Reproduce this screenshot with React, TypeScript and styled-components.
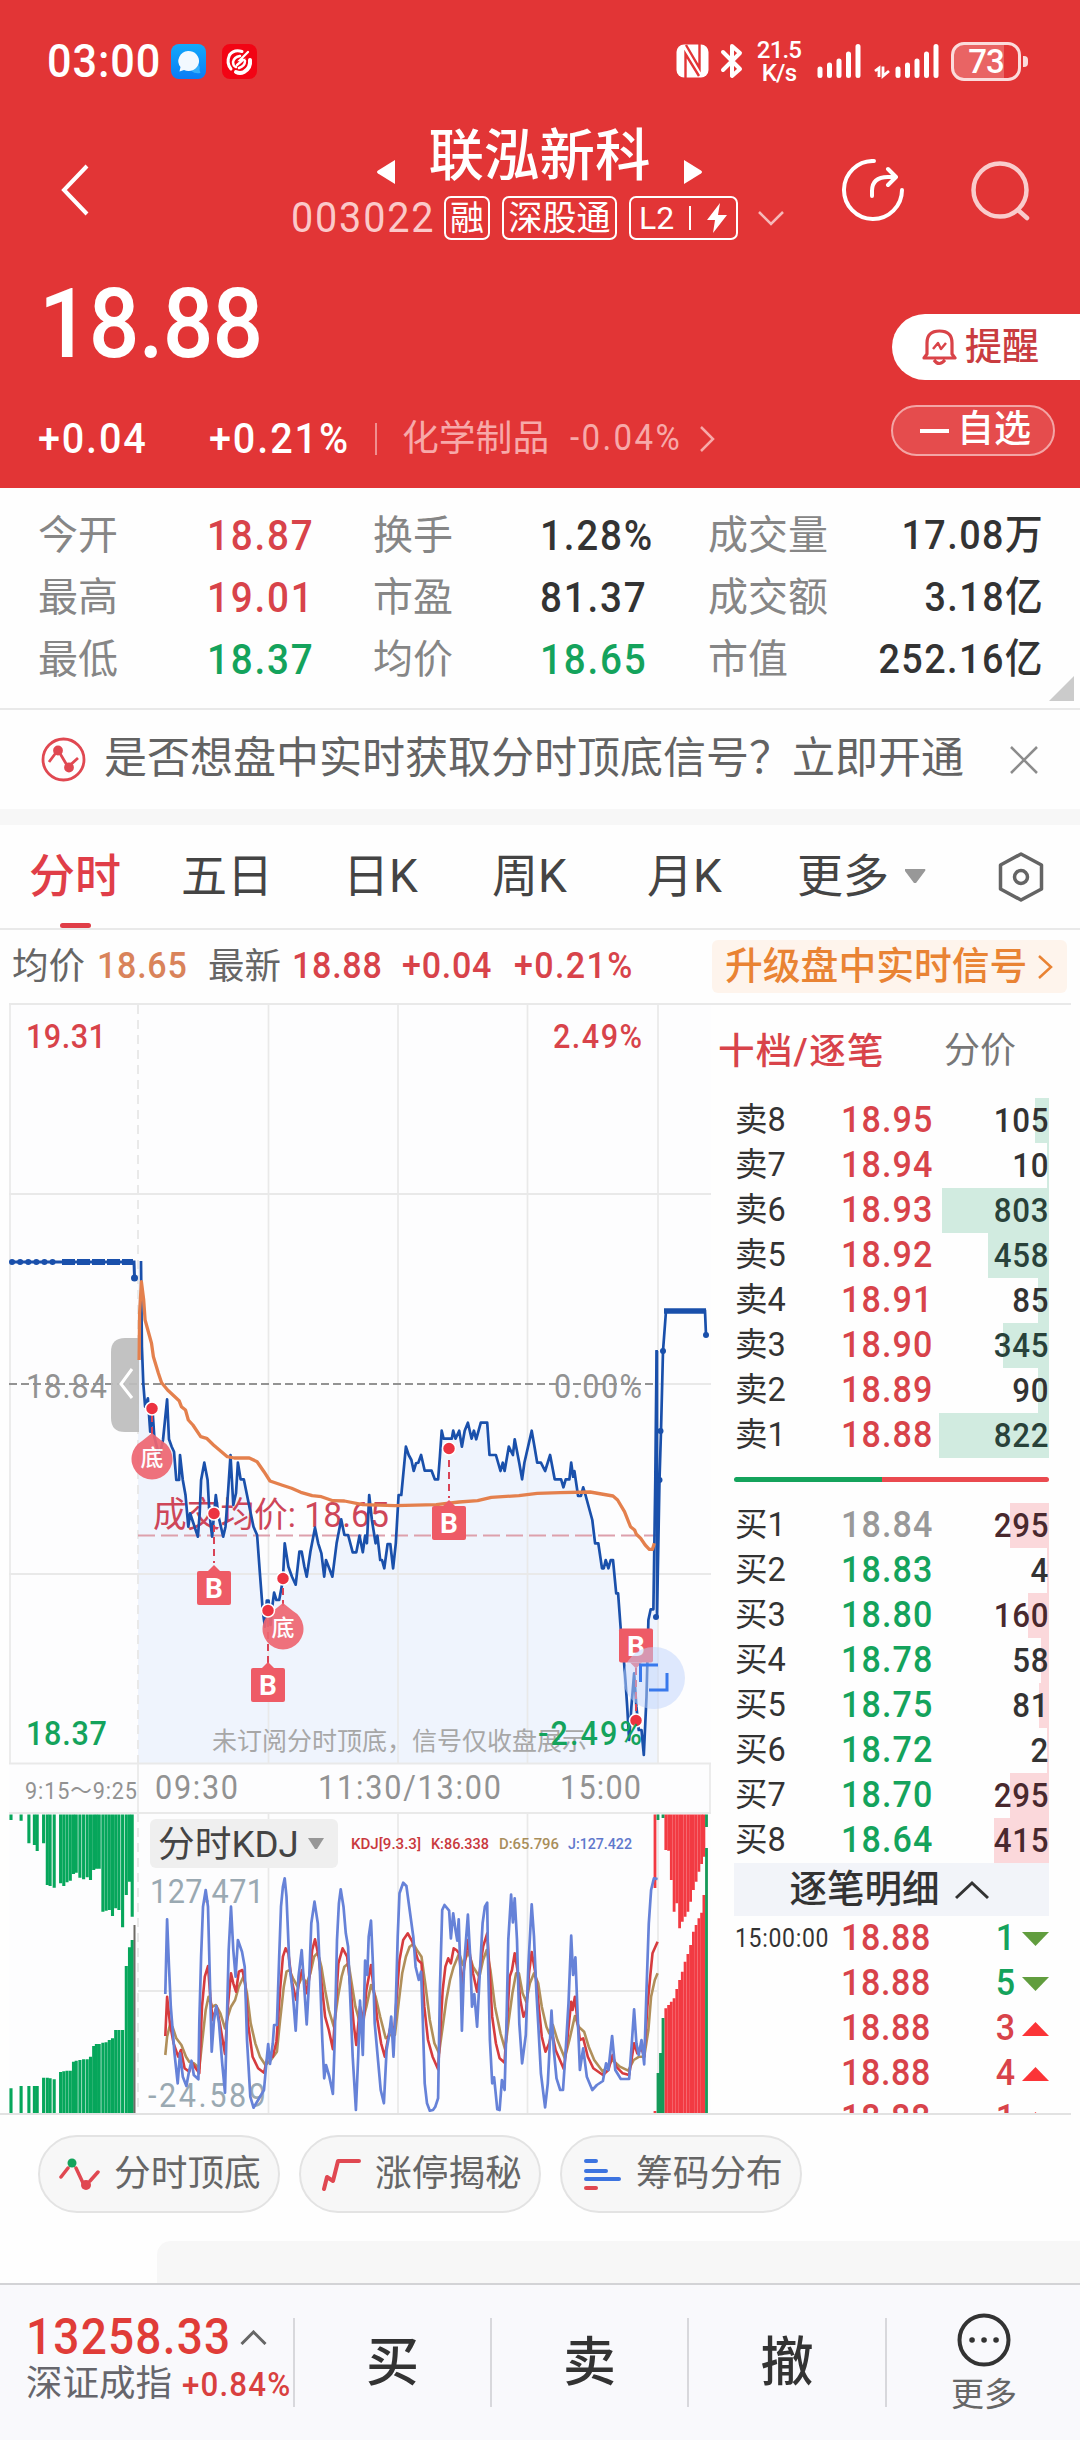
import React from "react";
import styled, { createGlobalStyle, css } from "styled-components";

const RED = "#e23536";
const UP = "#d8434a";
const DOWN = "#14a35c";
const LINE = "#e9e9e9";
const BLUE = "#1a50ab";

const Global = createGlobalStyle`
  * { box-sizing: border-box; }
  body { margin: 0; background: #fefefe; }
  body, svg text { font-family: Roboto, "Noto Sans CJK SC", sans-serif; }
  svg { display: block; flex: none; }
`;

const Page = styled.div`
  width: 1080px;
  height: 2440px;
  overflow: hidden;
  display: flex;
  flex-direction: column;
  background: #fefefe;
`;

const Txt = styled.span<{ $s: number; $c?: string; $ls?: number; $w?: number; $b?: number; $up?: number; $down?: number }>`
  display: block;
  flex: none;
  white-space: nowrap;
  line-height: 1.2;
  font-size: ${(p) => p.$s}px;
  color: ${(p) => p.$c || "inherit"};
  letter-spacing: ${(p) => p.$ls || 0}px;
  font-weight: ${(p) => p.$b || 400};
  width: ${(p) => (p.$w ? p.$w + "px" : "auto")};
  padding-bottom: ${(p) => p.$up || 0}px;
  padding-top: ${(p) => p.$down || 0}px;
`;

/* Figures are set slightly condensed with open tracking */
const Num = styled(Txt)<{ $right?: boolean }>`
  letter-spacing: calc(0.046em + ${(p) => p.$ls || 0}px);
  transform: scaleX(0.92);
  transform-origin: ${(p) => (p.$right ? "right" : "left")} center;
  ${(p) => p.$right && css`margin-right: -0.046em;`}
`;

/* ---------- header ---------- */
const Header = styled.header`
  height: 488px;
  flex: none;
  background: ${RED};
  color: #fff;
`;
const StatusBar = styled.div`
  height: 122px;
  padding: 0 52px 0 47px;
  display: flex;
  align-items: center;
`;
const AppIcon = styled.span<{ $bg: string }>`
  width: 35px;
  height: 35px;
  margin-right: 16px;
  border-radius: 8px;
  background: ${(p) => p.$bg};
`;
const StatusRight = styled.div`
  margin-left: auto;
  display: flex;
  align-items: center;
`;
const Speed = styled.div`
  width: 50px;
  margin: 2px 12px 0 0;
  font-size: 24px;
  font-weight: 500;
  line-height: 23.5px;
  letter-spacing: -0.8px;
  text-align: center;
  white-space: nowrap;
`;
const Battery = styled.div`
  width: 70px;
  height: 39px;
  margin-left: 11px;
  border: 3px solid #fbdcdc;
  border-radius: 13px;
  background: linear-gradient(90deg, #e96464 78%, ${RED} 78%);
  text-align: center;
  font-size: 33px;
  font-weight: 500;
  line-height: 34px;
  letter-spacing: -1px;
`;
const BatteryTip = styled.div`
  width: 5px;
  height: 11px;
  margin: 0 0 0 2px;
  border-radius: 0 4px 4px 0;
  background: #fbdcdc;
`;
const Nav = styled.div`
  height: 136px;
  padding-left: 61px;
  display: grid;
  grid-template-columns: 230px 551px 129px 60px;
  align-items: center;
`;
const TitleBlock = styled.div`
  width: 494px;
  align-self: start;
  display: flex;
  flex-direction: column;
`;
const TitleRow = styled.div`
  height: 68px;
  padding: 0 83px 0 86px;
  display: flex;
  justify-content: space-between;
  align-items: center;
`;
const TitleArrow = styled.svg`
  margin-top: 31px;
`;
const CodeRow = styled.div`
  height: 56px;
  display: flex;
  align-items: center;
`;
const Tag = styled.span<{ $w: number; $m: number }>`
  width: ${(p) => p.$w}px;
  height: 44px;
  margin-right: ${(p) => p.$m}px;
  border: 2px solid #fff;
  border-radius: 7px;
  display: flex;
  align-items: center;
  justify-content: center;
  gap: 15px;
  font-size: 34px;
  line-height: 38px;
  white-space: nowrap;
`;
const TagBar = styled.i`
  width: 2px;
  height: 24px;
  background: #fff;
`;
const Quote = styled.div`
  height: 230px;
  display: grid;
  grid-template-columns: 891px 189px;
`;
const PriceRow = styled.div`
  height: 132px;
  padding-left: 39px;
  display: flex;
  align-items: center;
`;
const ChangeRow = styled.div`
  height: 98px;
  padding-left: 38px;
  padding-bottom: 0;
  display: flex;
  align-items: center;
`;
const VBar = styled.i<{ $h: number; $c: string; $m?: string }>`
  width: 2px;
  height: ${(p) => p.$h}px;
  margin: ${(p) => p.$m || 0};
  background: ${(p) => p.$c};
`;
const Actions = styled.div`
  padding-top: 56px;
  display: flex;
  flex-direction: column;
  gap: 25px;
`;
const RemindButton = styled.button`
  height: 66px;
  margin: 0 0 0 1px;
  padding: 0 0 0 30px;
  border: 0;
  border-radius: 33px 0 0 33px;
  background: #fff;
  color: #c93c40;
  display: flex;
  align-items: center;
  gap: 8px;
  font-family: inherit;
`;
const WatchButton = styled.button`
  width: 164px;
  height: 51px;
  padding: 0 0 0 27px;
  border: 2px solid #f3a5a5;
  border-radius: 26px;
  background: #e54c4d;
  color: #fff;
  display: flex;
  align-items: center;
  gap: 8px;
  font-family: inherit;
`;
const Dash = styled.i`
  width: 29px;
  height: 4px;
  background: #fff;
`;

/* ---------- stats ---------- */
const Stats = styled.section`
  position: relative;
  height: 222px;
  flex: none;
  padding: 16px 38px 0;
  border-bottom: 2px solid ${LINE};
  display: grid;
  grid-template-columns: 169px 166px 167px 168px 130px 204px;
  grid-auto-rows: 62px;
  align-items: center;
  & > :nth-child(6n) { justify-self: end; }
`;
const Corner = styled.i`
  position: absolute;
  right: 6px;
  bottom: 7px;
  border-left: 25px solid transparent;
  border-bottom: 25px solid #cbcbcb;
`;
const Alert = styled.section`
  height: 99px;
  flex: none;
  padding: 0 42px 0 41px;
  display: flex;
  align-items: center;
  gap: 18px;
  & > svg:last-child { margin-left: auto; }
`;
const Band = styled.div`
  height: 16px;
  flex: none;
  background: #f7f7f7;
`;

/* ---------- tabs ---------- */
const Tabs = styled.nav`
  height: 105px;
  flex: none;
  padding-left: 29px;
  border-bottom: 2px solid ${LINE};
  display: grid;
  grid-template-columns: 152px 162px 149px 155px 150px 107px 94px 46px;
  align-items: center;
`;
const Tab = styled.div<{ $on?: boolean }>`
  position: relative;
  height: 103px;
  line-height: 103px;
  font-size: 46px;
  font-weight: ${(p) => (p.$on ? 500 : 400)};
  color: ${(p) => (p.$on ? "#e03e48" : "#444")};
  white-space: nowrap;
  &::after {
    content: "";
    display: ${(p) => (p.$on ? "block" : "none")};
    position: absolute;
    left: 31px;
    bottom: 0;
    width: 31px;
    height: 5px;
    border-radius: 3px;
    background: #e03e48;
  }
`;
const InfoRow = styled.div`
  height: 73px;
  flex: none;
  padding-left: 12px;
  display: flex;
  align-items: center;
`;
const Upgrade = styled.div`
  width: 355px;
  height: 53px;
  padding: 0 14px 0 13px;
  border-radius: 6px;
  background: #fef4ec;
  display: flex;
  align-items: center;
  justify-content: space-between;
`;

/* ---------- chart and order book ---------- */
const Main = styled.section`
  height: 1112px;
  flex: none;
  margin: 0 9px 0 0;
  display: flex;
  border-bottom: 2px solid #e2e2e2;
  overflow: hidden;
`;
const ChartBox = styled.div`
  position: relative;
  width: 711px;
  flex: none;
`;
const IndicatorSelect = styled.div`
  position: absolute;
  left: 150px;
  top: 816px;
  width: 188px;
  height: 49px;
  padding: 0 14px 0 8px;
  border-radius: 6px;
  background: #efefef;
  display: flex;
  align-items: center;
  justify-content: space-between;
`;
const Book = styled.div`
  flex: 1;
  padding-left: 23px;
  padding-right: 22px;
  border-top: 2px solid ${LINE};
`;
const BookTabs = styled.div`
  height: 93px;
  margin-left: -16px;
  display: flex;
  align-items: center;
`;
const Row = styled.div<{ $tint: string; $bar: number }>`
  height: 45px;
  padding-left: 1px;
  display: grid;
  grid-template-columns: 106px 100px 107px;
  align-items: center;
  background: linear-gradient(${(p) => p.$tint}, ${(p) => p.$tint}) right / ${(p) => p.$bar}px 100% no-repeat;
  & > :last-child { justify-self: end; }
`;
const Ratio = styled.div`
  height: 5px;
  margin: 19px 0 21px;
  border-radius: 3px;
  background: linear-gradient(90deg, #14a35c 47%, #ea4a4f 47%);
`;
const DetailHead = styled.div`
  height: 53px;
  padding-right: 5px;
  background: #f2f4f9;
  display: flex;
  align-items: center;
  justify-content: center;
  gap: 15px;
`;
const TickRow = styled.div`
  height: 45px;
  padding-left: 1px;
  display: grid;
  grid-template-columns: 106px 100px 1fr 34px;
  align-items: center;
  & > :nth-child(3) { justify-self: end; }
  & > :last-child { justify-self: end; }
`;

/* ---------- bottom ---------- */
const Pills = styled.div`
  height: 126px;
  flex: none;
  padding: 20px 38px 0;
  display: flex;
  gap: 19px;
`;
const Pill = styled.div`
  width: 242px;
  height: 78px;
  padding-left: 19px;
  border: 2px solid #e3e3e3;
  border-radius: 39px;
  background: #f7f7f7;
  display: flex;
  align-items: center;
  gap: 14px;
`;
const Sheet = styled.div`
  height: 42px;
  flex: none;
  margin-left: 157px;
  border-top-left-radius: 14px;
  background: #f7f7f7;
`;
const Footer = styled.footer`
  height: 157px;
  flex: none;
  border-top: 2px solid #d3d3d6;
  background: #f9f9fc;
  display: grid;
  grid-template-columns: 293px 197px 197px 198px 1fr;
`;
const IndexCell = styled.div`
  padding: 24px 0 0 26px;
  display: flex;
  flex-direction: column;
`;
const Inline = styled.div<{ $h: number }>`
  height: ${(p) => p.$h}px;
  display: flex;
  align-items: center;
`;
const TradeCell = styled.div`
  height: 89px;
  margin-top: 33px;
  padding-bottom: 9px;
  border-left: 2px solid #d8d8dc;
  display: flex;
  flex-direction: column;
  align-items: center;
  justify-content: center;
  font-size: 53px;
  font-weight: 500;
  color: #333;
`;
const MoreCell = styled(TradeCell)`
  padding: 3px 0 0 1px;
  gap: 8px;
`;

/* ---------- data ---------- */
const stats: [string, string, string][][] = [
  [["今开", "18.87", UP], ["换手", "1.28%", "#333"], ["成交量", "17.08万", "#333"]],
  [["最高", "19.01", UP], ["市盈", "81.37", "#333"], ["成交额", "3.18亿", "#333"]],
  [["最低", "18.37", DOWN], ["均价", "18.65", DOWN], ["市值", "252.16亿", "#333"]],
];
const sells: [string, string, string, number][] = [
  ["卖8", "18.95", "105", 14], ["卖7", "18.94", "10", 2], ["卖6", "18.93", "803", 107], ["卖5", "18.92", "458", 61],
  ["卖4", "18.91", "85", 11], ["卖3", "18.90", "345", 46], ["卖2", "18.89", "90", 11], ["卖1", "18.88", "822", 110],
];
const buys: [string, string, string, number][] = [
  ["买1", "18.84", "295", 39], ["买2", "18.83", "4", 2], ["买3", "18.80", "160", 21], ["买4", "18.78", "58", 8],
  ["买5", "18.75", "81", 10], ["买6", "18.72", "2", 2], ["买7", "18.70", "295", 39], ["买8", "18.64", "415", 55],
];
const ticks: [string, string, boolean][] = [
  ["15:00:00", "1", false], ["", "5", false], ["", "3", true], ["", "4", true], ["", "1", true],
];

const priceData = "307,-357 309,-100 312,10 316,80 322,55 327,155 332,85 336,170 347,230 355,180 364,58 368,178 374,200 379,215 384,300 390,300 392,225 398,300 404,345 410,440 414,400 420,425 431,470 435,400 438,300 445,248 452,300 456,400 462,470 470,345 476,410 486,470 491,440 497,330 502,225 508,375 514,340 518,248 524,298 531,298 538,345 546,400 552,440 560,465 566,580 572,690 577,740 581,662 585,662 589,735 592,690 597,638 602,660 608,660 616,600 620,490 628,560 636,590 644,614 652,515 657,515 663,560 668,590 676,515 686,443 693,490 700,520 706,590 710,540 717,565 724,590 733,490 743,418 750,465 758,465 768,517 776,517 783,467 790,517 795,467 799,490 804,345 810,420 818,490 822,467 828,540 832,540 837,565 844,492 850,492 856,565 862,490 868,345 874,345 884,200 890,225 896,240 901,273 906,250 911,248 917,225 925,272 940,272 947,298 954,298 958,230 962,152 966,176 984,176 987,152 992,176 1000,152 1006,200 1012,152 1019,128 1027,176 1032,152 1037,178 1047,128 1061,128 1066,225 1080,225 1090,273 1095,248 1099,273 1108,200 1117,225 1121,178 1131,250 1137,298 1142,248 1158,152 1164,200 1170,248 1178,248 1187,273 1198,225 1208,298 1222,298 1227,322 1232,298 1240,298 1244,248 1248,290 1251,273 1259,348 1265,348 1270,322 1275,345 1290,420 1296,490 1303,490 1311,565 1315,565 1319,540 1325,565 1330,540 1335,540 1342,640 1346,640 1352,750 1358,830 1362,900 1366,980 1370,1080 1375,980 1381,880 1386,980 1391,1050 1397,1050 1402,1125 1408,950 1412,720 1417,688 1423,688 1427,300 1430,-90";
const averageData = "303,-60 304,-200 308,-295 313,-240 316,-180 330,-110 334,-70 345,-20 352,8 365,30 390,62 395,80 404,90 410,120 420,135 437,170 450,175 465,195 495,230 510,234 543,234 560,245 575,275 588,303 615,316 635,325 655,337 680,347 700,350 725,362 750,363 790,374 860,377 950,374 1000,366 1040,362 1070,352 1130,347 1170,340 1220,338 1285,336 1310,342 1335,348 1345,360 1360,395 1373,440 1382,450 1386,463 1395,475 1405,495 1414,508 1421,508 1425,490";
const jData = "360,612 364,388 368,530 372,650 380,790 387,880 392,790 398,860 406,888 411,850 417,812 422,855 432,868 434,700 438,500 442,350 448,300 453,350 457,560 461,785 466,690 471,648 477,700 484,820 490,908 494,700 498,480 503,350 508,480 513,560 518,450 527,485 533,530 538,750 545,920 552,953 560,935 575,900 580,820 584,762 588,822 594,760 597,705 603,705 608,500 612,350 616,290 620,265 624,320 630,520 637,600 644,722 650,560 657,480 663,600 668,703 673,580 678,400 685,335 692,400 697,560 702,750 706,865 710,825 717,858 725,912 729,750 734,450 738,340 742,298 748,350 753,430 758,470 762,600 768,800 775,960 780,800 784,632 790,795 795,512 800,555 803,440 808,392 812,520 816,700 822,790 829,900 836,940 842,780 847,740 852,680 857,800 862,640 866,440 870,310 878,278 885,288 893,370 900,440 905,530 912,570 917,545 921,700 925,880 930,940 936,962 943,960 948,950 954,925 958,600 963,360 968,345 978,362 982,445 987,370 992,420 996,452 999,388 1003,560 1006,722 1011,520 1019,374 1024,500 1028,650 1033,612 1039,710 1045,550 1051,400 1056,350 1061,338 1063,520 1067,750 1072,880 1076,862 1083,958 1088,960 1093,870 1099,900 1103,700 1107,450 1113,314 1117,397 1121,325 1126,450 1131,700 1137,820 1145,735 1151,520 1158,343 1163,440 1168,600 1172,700 1178,850 1187,952 1193,880 1201,662 1206,780 1212,865 1220,900 1226,900 1232,780 1238,640 1244,437 1248,555 1253,502 1258,680 1263,840 1270,775 1278,860 1290,900 1300,885 1313,873 1320,820 1325,840 1333,738 1340,840 1352,867 1370,867 1376,760 1381,658 1386,760 1391,795 1397,750 1403,823 1408,600 1413,400 1418,300 1424,265 1432,267";
const kData = "360,738 364,620 370,700 378,760 388,800 394,780 402,835 412,845 418,818 434,850 440,650 446,560 453,528 458,620 463,690 472,650 480,710 490,792 496,650 503,550 508,580 514,605 520,545 528,540 534,580 540,700 550,800 562,835 575,848 585,790 594,800 602,755 610,600 616,500 622,475 628,490 635,570 645,630 652,570 658,540 668,610 674,560 680,480 686,448 694,500 702,600 708,680 716,720 725,778 731,650 737,520 746,475 756,500 764,600 770,700 776,765 784,650 792,690 798,600 808,525 815,610 822,690 830,760 838,800 845,745 852,700 858,735 864,620 870,510 878,450 888,430 898,455 910,510 918,520 924,650 932,750 942,800 954,838 960,700 964,600 970,530 976,505 982,520 988,475 994,480 1000,490 1006,585 1012,520 1019,450 1024,500 1030,550 1039,605 1046,530 1052,470 1061,430 1066,540 1072,680 1080,760 1088,805 1099,818 1104,700 1110,560 1115,540 1121,490 1127,540 1133,630 1140,680 1146,660 1152,550 1158,486 1166,550 1174,660 1180,740 1188,785 1196,760 1202,725 1210,780 1228,838 1236,740 1244,635 1247,660 1252,620 1258,700 1263,750 1270,745 1280,800 1292,835 1313,855 1325,840 1334,795 1342,830 1356,850 1370,855 1381,760 1388,790 1397,775 1403,800 1410,650 1416,560 1421,490 1432,455";
const dData = "360,795 364,740 370,705 376,712 384,745 395,765 405,800 412,815 422,820 434,835 440,760 448,660 454,620 462,650 470,645 480,670 490,715 496,680 503,650 512,630 520,590 530,560 538,610 546,700 556,760 566,800 578,825 590,810 603,785 610,690 618,590 624,545 630,540 638,565 648,590 658,560 668,580 676,550 684,500 692,488 700,530 708,600 716,660 727,710 736,620 744,560 750,530 759,520 766,580 774,650 782,690 790,690 798,650 808,585 818,620 828,680 840,745 850,735 860,735 868,640 876,550 884,500 892,470 900,462 908,480 918,500 926,580 936,690 946,760 956,790 964,710 972,630 980,570 988,530 1000,490 1008,525 1020,485 1030,530 1044,560 1052,510 1060,480 1068,540 1078,650 1090,730 1100,778 1108,690 1116,610 1124,550 1130,550 1138,610 1146,635 1154,580 1163,550 1172,580 1180,650 1190,710 1196,730 1204,705 1214,750 1230,805 1240,750 1252,678 1260,710 1272,725 1282,770 1294,810 1313,845 1334,810 1350,830 1368,842 1380,810 1392,800 1403,800 1412,720 1418,620 1426,570 1432,550";

/* Auction bars: x, end of the hanging bar, start of the standing bar */
const openBars: [number, number, number][] = [
  [24, 90, 895], [46, 92, 888], [63, 160, 888], [75, 165, 888], [81, 183, 888], [95, 160, 863], [103, 285, 863], [109, 288, 865],
  [118, 293, 868], [132, 280, 846], [139, 288, 844], [146, 277, 842], [153, 272, 842], [160, 252, 815], [166, 248, 812],
  [174, 263, 810], [182, 268, 808], [190, 262, 808], [197, 270, 800], [204, 240, 768], [210, 236, 762], [216, 236, 762],
  [224, 365, 758], [231, 362, 757], [238, 360, 750], [245, 378, 745], [252, 355, 720], [259, 360, 720], [267, 412, 720],
  [275, 315, 528], [282, 275, 472], [288, 380, 450],
];
const closeBars: [number, number, number][] = [
  [1450, 180, 655], [1456, 182, 645], [1462, 270, 635], [1468, 365, 625], [1474, 340, 597], [1480, 415, 570], [1486, 395, 545],
  [1492, 380, 515], [1498, 365, 492], [1504, 335, 465], [1510, 300, 425], [1516, 275, 405], [1522, 245, 385], [1528, 222, 368], [1533, 200, 315],
];

const SX = 720 / 1568;
const px = (x: number) => +(x * SX).toFixed(1);
const py = (y: number, top: number) => +(top + y / 3).toFixed(1);
const pts = (s: string, top: number) =>
  s.split(" ").map((p) => { const [x, y] = p.split(",").map(Number); return `${px(x)},${py(y, top)}`; }).join(" ");
const P = 1380;
const K = 1790;

const Label = ({ x, y, s, w, c, children, b = 400 }: { x: number; y: number; s: number; w: number; c: string; b?: number; children: string }) => (
  <text x={x} y={y} fontSize={s} fill={c} fontWeight={b} textLength={w} lengthAdjust="spacingAndGlyphs">{children}</text>
);
const Figure = ({ x, y, s, w, c, children, b = 400 }: { x: number; y: number; s: number; w: number; c: string; b?: number; children: string }) => (
  <text transform={`translate(${x} ${y}) scale(0.9 1)`} fontSize={s} fill={c} fontWeight={b} textLength={w / 0.9} lengthAdjust="spacing">{children}</text>
);

const BuyMark = ({ x, y, down }: { x: number; y: number; down?: boolean }) => (
  <g>
    <path d={down ? `M${x - 6} ${y + 17}h12l-6 6z` : `M${x - 6} ${y - 17}h12l-6 -6z`} fill="#ee5b66" />
    <rect x={x - 17} y={y - 17} width={34} height={34} rx={2} fill="#ee5b66" />
    <text x={x} y={y + 10} fontSize={28} fontWeight={700} fill="#fff" textAnchor="middle">B</text>
  </g>
);
const BottomMark = ({ x, y }: { x: number; y: number }) => (
  <g opacity={0.92}>
    <path d={`M${x} ${y - 25}l10 8a20.500 20.500 0 1 1 -20 0z`} fill="#ee6672" />
    <text x={x} y={y + 8} fontSize={23} fill="#fff" fontWeight={500} textAnchor="middle">底</text>
  </g>
);

const Chart = () => {
  const area = `138,1763 138,1270 ${pts(priceData, P)} 658,1763`;
  return (
    <svg width="711" height="1112" viewBox="0 1003 711 1112" fill="none">
      <rect x="9" y="1003" width="702" height="1112" fill="#fdfdfe" />
      <polygon points={area} fill="#eff4fd" />
      <g stroke={LINE} strokeWidth="2">
        <path d="M10 1003V1763M268.500 1003V1763M398 1003V1763M527.500 1003V1763M658 1003V1763M268.500 1813V2113M398 1813V2113M527.500 1813V2113M658 1813V2113M710 1763V1813M138 1763V1813" strokeWidth="1.700" />
        <path d="M9 1004H711M9 1194H711M658 1384H711M9 1574H711M9 1763.500H711M9 1813H711M138 1991H658" />
        <path d="M138 1005V1763M138 1813V2113" strokeDasharray="9 6" />
      </g>
      <path d="M9 1384H656" stroke="#939393" strokeWidth="2" strokeDasharray="8 4" />
      <Label x={212} y={1750} s={25} w={375} c="#a7a7a7">未订阅分时顶底，信号仅收盘展示</Label>
      <Label x={153} y={1527} s={35} w={236} c="#ce4659">成交均价: 18.65</Label>
      <path d="M138 1535.500H656" stroke="#dda0ac" strokeWidth="2" strokeDasharray="17 6" />
      <path d="M10 1262H134L134.500 1277" stroke={BLUE} strokeWidth="3" />
      <path d="M12 1262H60" stroke={BLUE} strokeWidth="6" strokeLinecap="round" strokeDasharray="0.1 8" />
      <path d="M62 1262H133" stroke={BLUE} strokeWidth="6" strokeDasharray="13 2" />
      <circle cx="134.500" cy="1278" r="3.500" fill={BLUE} />
      <path d="M111 1352q0 -14 14 -14H139V1432H125q-14 0 -14 -14z" fill="#bdbdbd" fillOpacity="0.920" />
      <path d="M132 1369L121 1384L132 1398" stroke="#fff" strokeWidth="3" />
      <polyline points={pts(priceData, P)} stroke={BLUE} strokeWidth="2.700" strokeLinejoin="round" />
      <path d="M657 1351V1617L659.500 1480L661 1431L663 1351L666 1311H705L706 1335" stroke={BLUE} strokeWidth="2.700" />
      <path d="M664 1311H706" stroke={BLUE} strokeWidth="5.500" />
      {[[659.5, 1480], [660.5, 1431], [663, 1351], [706, 1335], [656, 1617]].map(([x, y]) => <circle key={y} cx={x} cy={y} r="3" fill={BLUE} />)}
      <polyline points={pts(averageData, P)} stroke="#e4804d" strokeWidth="3.300" strokeLinejoin="round" />

      <Figure x={26} y={1048} s={34} w={80} c={UP} b={500}>19.31</Figure>
      <Figure x={553} y={1048} s={34} w={89} c={UP} b={500}>2.49%</Figure>
      <Figure x={26} y={1398} s={34} w={81} c="#929292">18.84</Figure>
      <Figure x={554} y={1398} s={34} w={88} c="#929292">0.00%</Figure>
      <Figure x={26} y={1745} s={34} w={81} c={DOWN} b={500}>18.37</Figure>

      <g stroke="#d94356" strokeWidth="2" strokeDasharray="7 5">
        <path d="M152 1415V1436M214 1525V1563M268 1620V1664M283 1588V1606M449 1460V1498M636 1668V1712" />
      </g>
      <BottomMark x={152} y={1458} />
      <BottomMark x={283} y={1628} />
      <BuyMark x={214} y={1588} />
      <BuyMark x={268} y={1685} />
      <BuyMark x={449} y={1523} />
      <BuyMark x={636} y={1645.5} down />
      <circle cx="654" cy="1678" r="31" fill="#bfd4fb" fillOpacity="0.500" />
      {[[152, 1408.5], [214, 1513.5], [268, 1610.5], [283, 1578.5], [449, 1448.5], [636, 1720.5]].map(([x, y]) => (
        <circle key={y} cx={x} cy={y} r="6.500" fill="#ec3341" stroke="#fff" strokeWidth="1.500" />
      ))}
      <path d="M640.500 1682V1665H658M667 1673V1690H649" stroke="#3979ec" strokeWidth="3" />
      <Figure x={538} y={1745} s={34} w={104} c={DOWN} b={500}>-2.49%</Figure>

      <Figure x={25} y={1799} s={24} w={112} c="#929292">9:15～9:25</Figure>
      <Figure x={155} y={1799} s={34} w={83} c="#929292">09:30</Figure>
      <Figure x={318} y={1799} s={34} w={183} c="#929292">11:30/13:00</Figure>
      <Figure x={560} y={1799} s={34} w={81} c="#929292">15:00</Figure>

      {openBars.map(([x, a, b]) => (
        <path key={x} d={`M${px(x)} 1814.500V${py(a, K)}M${px(x)} ${py(b, K)}V2113`} stroke="#06a65b" strokeWidth="3.100" />
      ))}
      <path d="M134.500 1925V2113" stroke="#6d6a66" strokeWidth="2" />
      {closeBars.map(([x, a, b]) => (
        <path key={x} d={`M${px(x)} 1814.500V${py(a, K)}M${px(x)} ${py(b, K)}V2113`} stroke="#f23a42" strokeWidth="2.800" />
      ))}
      <path d="M655 1814.500V1888M655 2111V2113" stroke="#f23a42" strokeWidth="2.800" />
      <path d="M658 1814.500V1820M663 1814.500V1818M706.500 1814.500V1827M706.500 1848V2113M658 2073V2113M660.500 2053V2113M663 2018V2113" stroke="#159a59" strokeWidth="2.800" />

      <Figure x={150} y={1903} s={34} w={114} c="#9aa9b2">127.471</Figure>
      <Figure x={148} y={2107} s={34} w={118} c="#9aa9b2">-24.589</Figure>
      <polyline points={pts(dData, K)} stroke="#b08f5a" strokeWidth="2.600" strokeLinejoin="round" />
      <polyline points={pts(kData, K)} stroke="#d63b3e" strokeWidth="2.600" strokeLinejoin="round" />
      <polyline points={pts(jData, K)} stroke="#6682d8" strokeWidth="2.700" strokeLinejoin="round" />
      <Label x={351} y={1849} s={15.5} w={70} c="#c9383d" b={500}>KDJ[9.3.3]</Label>
      <Label x={431} y={1849} s={15.5} w={58} c="#c9383d" b={500}>K:86.338</Label>
      <Label x={499} y={1849} s={15.5} w={60} c="#a98e5b" b={500}>D:65.796</Label>
      <Label x={568} y={1849} s={15.5} w={64} c="#5f78cc" b={500}>J:127.422</Label>
    </svg>
  );
};

const Bars = () => (
  <svg width="46" height="36" viewBox="0 0 46 36" stroke="#fff" strokeWidth="5" strokeLinecap="round">
    <path d="M4 26V32.500M13.500 22V32.500M23 18V32.500M32.500 11V32.500M42 3.500V32.500" />
  </svg>
);

export default function App() {
  return (
    <Page>
      <Global />
      <Header>
        <StatusBar>
          <Num $s={47} $w={124} $b={500} $ls={-1.2}>03:00</Num>
          <AppIcon $bg="linear-gradient(#12a9fb,#0a7cf5)">
            <svg width="35" height="35" viewBox="0 0 35 35">
              <path d="M25 19a6 6 0 0 1 3.500 7l1 3q-6 1-9-2z" fill="#35aefa" />
              <path d="M17 7a10.500 10 0 1 1 -4 19l-4.500 1.500 1-4.500A10.500 10 0 0 1 17 7z" fill="#f2f9ff" />
            </svg>
          </AppIcon>
          <AppIcon $bg="#f20414">
            <svg width="35" height="35" viewBox="0 0 35 35" fill="none" stroke="#fff" strokeLinecap="round">
              <path d="M20 7.500Q12 5 7.500 11Q4 19 9 25" strokeWidth="3" />
              <path d="M28 16Q29 24 22 28Q18 30 14 28" strokeWidth="4" />
              <path d="M18 12Q12 13 11 18Q11 22 14 23M23 17Q23 22 17 24" strokeWidth="2.500" />
              <path d="M26 8L18 16H21L15 21" strokeWidth="2.300" />
            </svg>
          </AppIcon>
          <StatusRight>
            <svg width="42" height="34" viewBox="0 0 42 34">
              <rect x="0.500" y="0.500" width="32" height="33" rx="7.500" fill="#fff" />
              <path d="M9.500 34V10L23 32M23.500 0V24L10 1" fill="none" stroke={RED} strokeWidth="2.400" />
            </svg>
            <svg width="36" height="36" viewBox="-2 0 36 36" fill="none" stroke="#fff" strokeWidth="4" strokeLinejoin="round" strokeLinecap="round">
              <path d="M3 9L20 26L12 33V3L20 10L3 27" />
            </svg>
            <Speed>21.5<br />K/s</Speed>
            <Bars />
            <svg width="32" height="36" viewBox="0 0 32 36" fill="none" stroke="#fff" strokeWidth="2.800">
              <path d="M13 28L17 25V34M21 23.500V33L27 28" />
            </svg>
            <Bars />
            <Battery>73</Battery>
            <BatteryTip />
          </StatusRight>
        </StatusBar>
        <Nav>
          <svg width="28" height="52" viewBox="0 0 28 52" fill="none" stroke="#fff" strokeWidth="4"><path d="M26 2L3 26L26 50" /></svg>
          <TitleBlock>
            <TitleRow>
              <TitleArrow width="18" height="26" viewBox="0 0 18 26"><path d="M18 1V25L1 14.500Q-1 13 1 11.500z" fill="#fff" /></TitleArrow>
              <Txt $s={55.5} $b={500} $down={2}>联泓新科</Txt>
              <TitleArrow width="18" height="26" viewBox="0 0 18 26"><path d="M0 1V25L17 14.500Q19 13 17 11.500z" fill="#fff" /></TitleArrow>
            </TitleRow>
            <CodeRow>
              <Num $s={43} $w={153} $c="#fbc9c9">003022</Num>
              <Tag $w={46} $m={12}>融</Tag>
              <Tag $w={115} $m={12}>深股通</Tag>
              <Tag $w={109} $m={20}>
                <Txt $s={32}>L2</Txt>
                <TagBar />
                <svg width="22" height="30" viewBox="0 0 22 30"><path d="M14 0L1 17H9L7 30L21 12H12z" fill="#fff" /></svg>
              </Tag>
              <svg width="26" height="16" viewBox="0 0 26 16" fill="none" stroke="#f6b9b9" strokeWidth="2.500"><path d="M1 2L13 14L25 2" /></svg>
            </CodeRow>
          </TitleBlock>
          <svg width="62" height="62" viewBox="0 0 62 62" fill="none" stroke="#fff" strokeWidth="4" strokeLinecap="round" strokeLinejoin="round">
            <path d="M32 2A29 29 0 1 0 60 31M30 37V32Q30 18 46 18H53M46 10L54 18L46 26" />
          </svg>
          <svg width="60" height="62" viewBox="0 0 60 62" fill="none" stroke="#f9cccc" strokeWidth="4.500" strokeLinecap="round">
            <circle cx="29" cy="31" r="26.500" /><path d="M47 51L56 59" />
          </svg>
        </Nav>
        <Quote>
          <div>
            <PriceRow><Num $s={97} $b={500} $ls={-5.4}>18.88</Num></PriceRow>
            <ChangeRow>
              <Num $s={43} $b={500} $w={171}>+0.04</Num>
              <Num $s={43} $b={500} $w={166} $ls={0.1}>+0.21%</Num>
              <VBar $h={32} $c="#f08f8f" $m="0 25px 0 0" />
              <Txt $s={36.8} $w={168} $c="#f7a9a9">化学制品</Txt>
              <Num $s={36} $w={129} $c="#f7a9a9" $ls={0.9}>-0.04%</Num>
              <svg width="17" height="26" viewBox="0 0 17 26" fill="none" stroke="#f7a9a9" strokeWidth="2.500"><path d="M2 1L14 13L2 25" /></svg>
            </ChangeRow>
          </div>
          <Actions>
            <RemindButton>
              <svg width="35" height="37" viewBox="0 0 35 37" fill="none" stroke="#d94348" strokeWidth="3.200" strokeLinejoin="round">
                <path d="M2 29L5 25V14Q5 2 17.500 2Q30 2 30 14V25L33 29zM12 31Q17 38 23 31" />
                <path d="M11 20L16 14L19 20L24 14" strokeWidth="2.500" />
              </svg>
              <Txt $s={37} $b={500} $down={2}>提醒</Txt>
            </RemindButton>
            <WatchButton><Dash /><Txt $s={37} $b={500}>自选</Txt></WatchButton>
          </Actions>
        </Quote>
      </Header>

      <Stats>
        {stats.map((r) => r.map(([l, v, c], i) => (
          <React.Fragment key={l}>
            <Txt $s={40} $c="#868686" $down={1}>{l}</Txt>
            <Num $s={i === 2 ? 41 : 42} $b={500} $c={c} $right={i === 2} $down={2} $ls={i === 2 ? -0.3 : 0}>{v}</Num>
          </React.Fragment>
        )))}
        <Corner />
      </Stats>
      <Alert>
        <svg width="45" height="45" viewBox="0 0 45 45" fill="none" stroke="#e04851" strokeWidth="2.800">
          <circle cx="22.500" cy="22.500" r="20.500" />
          <path d="M8 25L17 13L27 30L37 21" /><circle cx="17" cy="13.500" r="3.500" fill="#e04851" /><circle cx="28" cy="30.500" r="3.500" fill="#e04851" />
        </svg>
        <Txt $s={43} $c="#636363" $up={1}>是否想盘中实时获取分时顶底信号？立即开通</Txt>
        <svg width="28" height="28" viewBox="0 0 28 28" stroke="#8c8c8c" strokeWidth="2.500"><path d="M1 1L27 27M27 1L1 27" /></svg>
      </Alert>
      <Band />
      <Tabs>
        <Tab $on>分时</Tab><Tab>五日</Tab><Tab>日K</Tab><Tab>周K</Tab><Tab>月K</Tab><Tab>更多</Tab>
        <svg width="22" height="15" viewBox="0 0 22 15"><path d="M1 0H21Q22 1 21 2L12 14H10L1 2z" fill="#989898" /></svg>
        <svg width="46" height="50" viewBox="0 0 46 50" fill="none" stroke="#646464" strokeWidth="3.500" strokeLinejoin="round">
          <path d="M23 2L43.500 13V37L23 48L2.500 37V13z" /><circle cx="23" cy="25" r="6.500" />
        </svg>
      </Tabs>
      <InfoRow>
        <Txt $s={36.5} $w={85} $c="#666">均价</Txt>
        <Num $s={37} $w={111} $c="#d9835a" $b={500} $ls={-0.9}>18.65</Num>
        <Txt $s={36.5} $w={84} $c="#666">最新</Txt>
        <Num $s={37} $w={110} $c={UP} $b={500} $ls={-0.9}>18.88</Num>
        <Num $s={37} $w={112} $c={UP} $b={500} $ls={-0.9}>+0.04</Num>
        <Num $s={37} $w={198} $c={UP} $b={500} $ls={-0.2}>+0.21%</Num>
        <Upgrade>
          <Txt $s={37.8} $c="#e98333" $b={500}>升级盘中实时信号</Txt>
          <svg width="16" height="24" viewBox="0 0 16 24" fill="none" stroke="#e98333" strokeWidth="2.500"><path d="M2 1L14 12L2 23" /></svg>
        </Upgrade>
      </InfoRow>

      <Main>
        <ChartBox>
          <Chart />
          <IndicatorSelect>
            <Txt $s={36.7} $c="#444" $down={3}>分时KDJ</Txt>
            <svg width="16" height="12" viewBox="0 0 16 12"><path d="M0 0H16L9 11H7z" fill="#979797" /></svg>
          </IndicatorSelect>
        </ChartBox>
        <Book>
          <BookTabs>
            <Txt $s={36.5} $w={226} $c={UP} $b={500} $ls={1.3}>十档/逐笔</Txt>
            <Txt $s={36} $c="#777">分价</Txt>
          </BookTabs>
          {sells.map(([l, p, q, w]) => (
            <Row key={l} $tint="#d1ebe0" $bar={w}>
              <Txt $s={32.5} $c="#333">{l}</Txt>
              <Num $s={37} $c={UP} $b={500} $ls={-0.5}>{p}</Num>
              <Num $s={34} $right $b={500} $ls={-0.8} $c={w > 40 ? "#29423a" : "#333"}>{q}</Num>
            </Row>
          ))}
          <Ratio />
          {buys.map(([l, p, q, w], i) => (
            <Row key={l} $tint="#fbd8db" $bar={w}>
              <Txt $s={32.5} $c="#333">{l}</Txt>
              <Num $s={37} $c={i ? DOWN : "#999"} $b={500} $ls={-0.5}>{p}</Num>
              <Num $s={34} $right $b={500} $ls={-0.8} $c={w > 20 ? "#49292e" : "#333"}>{q}</Num>
            </Row>
          ))}
          <DetailHead>
            <Txt $s={37.5} $c="#333" $b={500} $up={1}>逐笔明细</Txt>
            <svg width="34" height="20" viewBox="0 0 34 20" fill="none" stroke="#333" strokeWidth="3"><path d="M1 18L17 3L33 18" /></svg>
          </DetailHead>
          {ticks.map(([t, q, up], i) => (
            <TickRow key={i}>
              <Num $s={25} $c="#333" $ls={-0.4}>{t}</Num>
              <Num $s={37} $c={UP} $b={500} $ls={-1}>18.88</Num>
              <Num $s={37} $right $c={up ? UP : DOWN} $b={500}>{q}</Num>
              <svg width="27" height="14" viewBox="0 0 26 14" preserveAspectRatio="none">{up ? <path d="M0 14L13 0L26 14z" fill="#fb3437" /> : <path d="M0 0H26L13 14z" fill="#619d3e" />}</svg>
            </TickRow>
          ))}
        </Book>
      </Main>

      <Pills>
        <Pill>
          <svg width="41" height="34" viewBox="0 0 41 34" fill="none" stroke="#e04851" strokeWidth="3.500" strokeLinecap="round">
            <path d="M2 20L9 11M17 11L24 26M31 24L39 15" /><circle cx="13" cy="6" r="4.500" fill="#14a35c" stroke="none" /><circle cx="27" cy="28" r="5" fill="#e04851" stroke="none" />
          </svg>
          <Txt $s={36.7} $c="#666" $down={1}>分时顶底</Txt>
        </Pill>
        <Pill>
          <svg width="41" height="34" viewBox="0 0 41 34" fill="none" stroke="#e04851" strokeWidth="4" strokeLinejoin="round" strokeLinecap="round">
            <path d="M4 32L7 20L13 24L18 4H39" />
          </svg>
          <Txt $s={36.7} $c="#666" $down={1}>涨停揭秘</Txt>
        </Pill>
        <Pill>
          <svg width="41" height="34" viewBox="0 0 41 34" stroke="#3d74e0" strokeWidth="4" strokeLinecap="round">
            <path d="M5 4H15M5 14H25M5 22H38" /><path d="M5 31H15" stroke="#e04851" />
          </svg>
          <Txt $s={36.7} $c="#666" $down={1}>筹码分布</Txt>
        </Pill>
      </Pills>
      <Sheet />
      <Footer>
        <IndexCell>
          <Inline $h={56}>
            <Num $s={50} $w={214} $c="#e03c38" $b={500} $ls={-1}>13258.33</Num>
            <svg width="27" height="15" viewBox="0 0 26 15" fill="none" stroke="#666" strokeWidth="3"><path d="M1 14L13 2L25 14" /></svg>
          </Inline>
          <Inline $h={38}>
            <Txt $s={36.5} $w={156} $c="#66666c">深证成指</Txt>
            <Num $s={34} $c="#d9403f" $b={500} $ls={-0.3}>+0.84%</Num>
          </Inline>
        </IndexCell>
        <TradeCell>买</TradeCell>
        <TradeCell>卖</TradeCell>
        <TradeCell>撤</TradeCell>
        <MoreCell>
          <svg width="54" height="54" viewBox="0 0 54 54" fill="none" stroke="#333" strokeWidth="4">
            <circle cx="27" cy="27" r="24.500" /><path d="M15 27h.1M27 27h.1M39 27h.1" strokeWidth="5.500" strokeLinecap="round" />
          </svg>
          <Txt $s={33} $c="#666">更多</Txt>
        </MoreCell>
      </Footer>
    </Page>
  );
}
